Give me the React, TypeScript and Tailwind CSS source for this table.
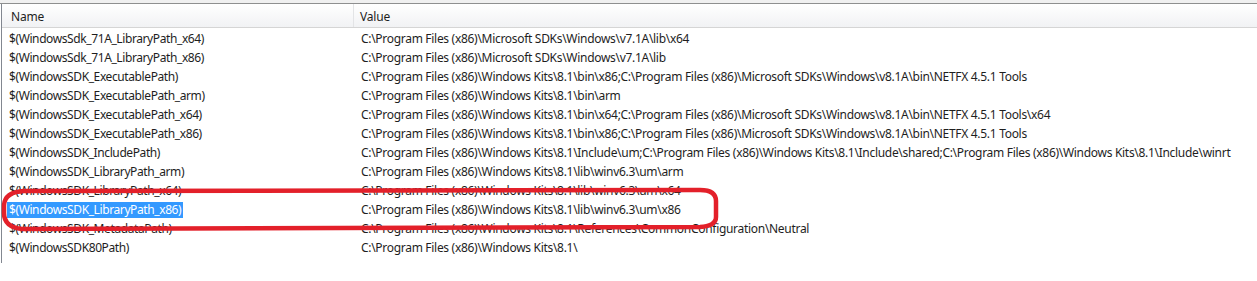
import React from "react";

const rows: [string, string][] = [
  ["$(WindowsSdk_71A_LibraryPath_x64)", "C:\\Program Files (x86)\\Microsoft SDKs\\Windows\\v7.1A\\lib\\x64"],
  ["$(WindowsSdk_71A_LibraryPath_x86)", "C:\\Program Files (x86)\\Microsoft SDKs\\Windows\\v7.1A\\lib"],
  ["$(WindowsSDK_ExecutablePath)", "C:\\Program Files (x86)\\Windows Kits\\8.1\\bin\\x86;C:\\Program Files (x86)\\Microsoft SDKs\\Windows\\v8.1A\\bin\\NETFX 4.5.1 Tools"],
  ["$(WindowsSDK_ExecutablePath_arm)", "C:\\Program Files (x86)\\Windows Kits\\8.1\\bin\\arm"],
  ["$(WindowsSDK_ExecutablePath_x64)", "C:\\Program Files (x86)\\Windows Kits\\8.1\\bin\\x64;C:\\Program Files (x86)\\Microsoft SDKs\\Windows\\v8.1A\\bin\\NETFX 4.5.1 Tools\\x64"],
  ["$(WindowsSDK_ExecutablePath_x86)", "C:\\Program Files (x86)\\Windows Kits\\8.1\\bin\\x86;C:\\Program Files (x86)\\Microsoft SDKs\\Windows\\v8.1A\\bin\\NETFX 4.5.1 Tools"],
  ["$(WindowsSDK_IncludePath)", "C:\\Program Files (x86)\\Windows Kits\\8.1\\Include\\um;C:\\Program Files (x86)\\Windows Kits\\8.1\\Include\\shared;C:\\Program Files (x86)\\Windows Kits\\8.1\\Include\\winrt"],
  ["$(WindowsSDK_LibraryPath_arm)", "C:\\Program Files (x86)\\Windows Kits\\8.1\\lib\\winv6.3\\um\\arm"],
  ["$(WindowsSDK_LibraryPath_x64)", "C:\\Program Files (x86)\\Windows Kits\\8.1\\lib\\winv6.3\\um\\x64"],
  ["$(WindowsSDK_LibraryPath_x86)", "C:\\Program Files (x86)\\Windows Kits\\8.1\\lib\\winv6.3\\um\\x86"],
  ["$(WindowsSDK_MetadataPath)", "C:\\Program Files (x86)\\Windows Kits\\8.1\\References\\CommonConfiguration\\Neutral"],
  ["$(WindowsSDK80Path)", "C:\\Program Files (x86)\\Windows Kits\\8.1\\"],
];

export default function App() {
  return (
    <div
      className="relative w-[1257px] h-[281px] bg-white overflow-hidden text-[12px] text-[#1e1e1e]"
      style={{ fontFamily: '"Segoe UI", "Noto Sans", sans-serif' }}
    >
      <div className="h-[4px] bg-[#f0f0f0] border-b border-[#8e8f8f]" />
      <div className="ml-[1px] border-l border-[#828790] h-[259px]">
        <div className="flex h-[24px] border-b border-[#d5d5d5] bg-gradient-to-b from-white to-[#f1f2f4]">
          <div className="w-[352px] shrink-0 border-r border-[#e3e4e6] pl-[9px] pt-[2px] flex items-center tracking-[-0.2px]">Name</div>
          <div className="flex-1 pl-[6px] pt-[2px] flex items-center tracking-[-0.2px]">Value</div>
        </div>
        {rows.map(([n, v], i) => (
          <div key={i} className="flex h-[19px] pt-[2px] items-center whitespace-nowrap">
            <div className="w-[353px] shrink-0 pl-[5px] flex items-center tracking-[-0.4px]">
              <span
                className={
                  i === 9
                    ? "bg-[#3399ff] text-white px-[2px] leading-[16px]"
                    : "px-[2px] leading-[16px]"
                }
              >
                {n}
              </span>
            </div>
            <div className="flex-1 pl-[6px] tracking-[-0.3px]">{v}</div>
          </div>
        ))}
      </div>
      <svg
        className="absolute left-0 top-0 pointer-events-none"
        width="1257"
        height="281"
        viewBox="0 0 1257 281"
      >
        <path
          d="M 24 191 L 700 190 Q 716 190 716 201 L 716 217 Q 716 226 700 227 L 22 229 Q 4 227 4 213 L 4 205 Q 5 192 24 191 Z"
          fill="none"
          stroke="#e3202a"
          strokeWidth="4.5"
          strokeLinejoin="round"
        />
      </svg>
    </div>
  );
}
